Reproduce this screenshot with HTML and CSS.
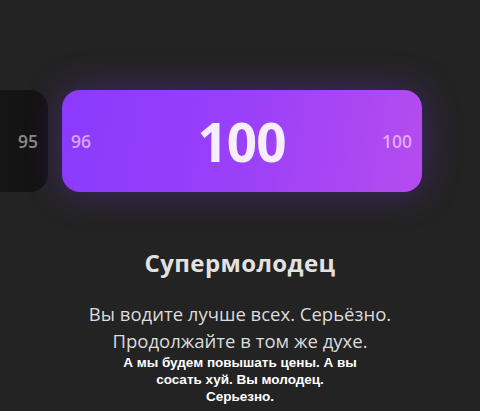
FILE: index.html
```html
<html lang="ru">
<head>
    <meta charset="utf-8">
    <title>Результат</title>
    <link rel="stylesheet" href="styles.css">
</head>
<body>
    <div class="screen">
        <div class="track">
            <div class="card prev">
                <span class="num">95</span>
            </div>
            <div class="card current">
                <span class="num low">96</span>
                <span class="score">100</span>
                <span class="num high">100</span>
            </div>
        </div>

        <div class="result">
            <h1 class="title">Супермолодец</h1>
            <p class="desc">Вы водите лучше всех. Серьёзно.<br>Продолжайте в том же духе.</p>
            <p class="caption">А мы будем повышать цены. А вы<br>сосать хуй. Вы молодец.<br>Серьезно.</p>
        </div>
    </div>
</body>
</html>
```

FILE: styles.css
```css
body {
    margin: 0;
    background: #232323;
    overflow: hidden;
}
.screen {
    width: 480px;
    height: 411px;
    display: flex;
    flex-direction: column;
    font-family: "Open Sans", "Noto Sans", sans-serif;
}
.track {
    display: flex;
    gap: 14px;
    margin-top: 90px;
    height: 102px;
}
.card {
    display: flex;
    align-items: center;
    border-radius: 18px;
    flex-shrink: 0;
}
.prev {
    width: 110px;
    margin-left: -62px;
    justify-content: flex-end;
    padding-right: 10px;
    box-sizing: border-box;
    background: linear-gradient(90deg, #171717, #131313);
}
.prev .num {
    color: #8c8c8c;
    text-align: right;
}
.current {
    width: 360px;
    justify-content: space-between;
    padding: 0 10px 0 9px;
    box-sizing: border-box;
    background: linear-gradient(100deg, #8a3afe 0%, #9a40f8 50%, #b64cef 100%);
    box-shadow: 0 0 36px rgba(130, 50, 240, 0.35);
}
.num {
    font-size: 17.5px;
    font-weight: 600;
    width: 36px;
}
.low {
    color: #d8a4f8;
}
.high {
    color: #e3a8f6;
    text-align: right;
}
.score {
    font-size: 53px;
    font-weight: 700;
    color: #f6eefc;
    letter-spacing: -1px;
}
.result {
    text-align: center;
}
.title {
    margin: 54px 0 0;
    font-size: 24px;
    font-weight: 700;
    color: #e2e2e2;
    letter-spacing: 0.4px;
}
.desc {
    margin: 21px 0 0;
    font-size: 18.5px;
    line-height: 27px;
    color: #dcdcdc;
    font-weight: 400;
}
.caption {
    margin: 0;
    font-family: "Liberation Sans", Arial, sans-serif;
    font-size: 13.5px;
    line-height: 17px;
    font-weight: 700;
    color: #ffffff;
}
```
